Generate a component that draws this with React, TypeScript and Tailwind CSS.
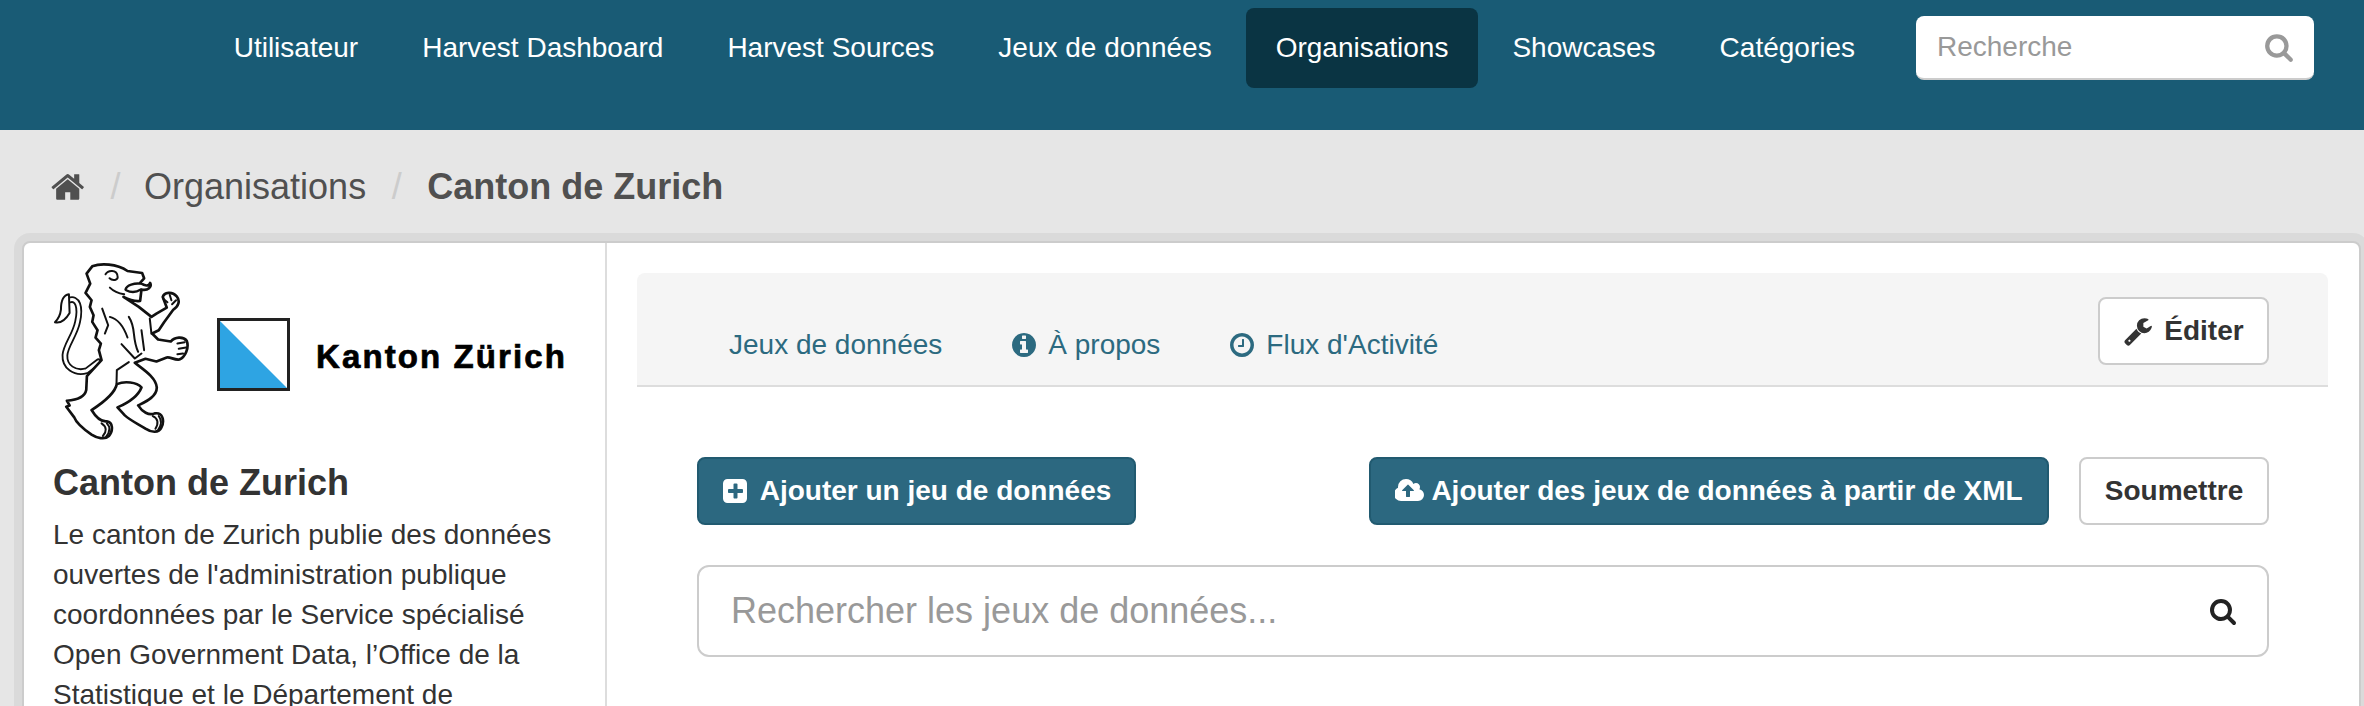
import type { ReactNode } from 'react';

const navItems = ['Utilisateur', 'Harvest Dashboard', 'Harvest Sources', 'Jeux de données', 'Organisations', 'Showcases', 'Catégories'];

function FaIcon({ d, className, box = '0 0 1792 1792' }: { d: string; className?: string; box?: string }) {
  return (
    <svg viewBox={box} className={className} fill="currentColor" aria-hidden="true">
      <path d={d} />
    </svg>
  );
}

const homePath = 'M1408 992v480q0 26-19 45t-45 19h-384v-384h-256v384h-384q-26 0-45-19t-19-45v-480q0-1 .5-3t.5-3l575-474 575 474q1 2 1 6zm223-69l-62 74q-8 9-21 11h-3q-13 0-21-7l-692-577-692 577q-12 8-24 7-13-2-21-11l-62-74q-8-10-7-23.5t11-20.5l719-599q32-26 76-26t76 26l244 204v-195q0-14 9-23t23-9h192q14 0 23 9t9 23v408l219 182q10 8 11 21.5t-7 23.5z';
const searchPath = 'M1216 832q0-185-131.5-316.5t-316.5-131.5-316.5 131.5-131.5 316.5 131.5 316.5 316.5 131.5 316.5-131.5 131.5-316.5zm512 832q0 52-38 90t-90 38q-54 0-90-38l-343-342q-179 124-399 124-143 0-273.5-55.5t-225-150-150-225-55.5-273.5 55.5-273.5 150-225 225-150 273.5-55.5 273.5 55.5 225 150 150 225 55.5 273.5q0 220-124 399l343 343q37 37 37 90z';
const infoPath = 'M1152 1376v-160q0-14-9-23t-23-9h-96v-512q0-14-9-23t-23-9h-320q-14 0-23 9t-9 23v160q0 14 9 23t23 9h96v320h-96q-14 0-23 9t-9 23v160q0 14 9 23t23 9h448q14 0 23-9t9-23zm-128-896v-160q0-14-9-23t-23-9h-192q-14 0-23 9t-9 23v160q0 14 9 23t23 9h192q14 0 23-9t9-23zm640 416q0 209-103 385.5t-279.5 279.5-385.5 103-385.5-103-279.5-279.5-103-385.5 103-385.5 279.5-279.5 385.5-103 385.5 103 279.5 279.5 103 385.5z';
const clockPath = 'M1024 544v448q0 14-9 23t-23 9h-320q-14 0-23-9t-9-23v-64q0-14 9-23t23-9h224v-352q0-14 9-23t23-9h64q14 0 23 9t9 23zm416 352q0-148-73-273t-198-198-273-73-273 73-198 198-73 273 73 273 198 198 273 73 273-73 198-198 73-273zm224 0q0 209-103 385.5t-279.5 279.5-385.5 103-385.5-103-279.5-279.5-103-385.5 103-385.5 279.5-279.5 385.5-103 385.5 103 279.5 279.5 103 385.5z';
const plusPath = 'M1344 960v-128q0-26-19-45t-45-19h-288v-288q0-26-19-45t-45-19h-128q-26 0-45 19t-19 45v288h-288q-26 0-45 19t-19 45v128q0 26 19 45t45 19h288v288q0 26 19 45t45 19h128q26 0 45-19t19-45v-288h288q26 0 45-19t19-45zm256-544v960q0 119-84.5 203.5t-203.5 84.5h-960q-119 0-203.5-84.5t-84.5-203.5v-960q0-119 84.5-203.5t203.5-84.5h960q119 0 203.5 84.5t84.5 203.5z';
const cloudPath = 'M1216 864q0-14-9-23l-352-352q-9-9-23-9t-23 9l-351 351q-10 12-10 24 0 14 9 23t23 9h224v352q0 13 9.5 22.5t22.5 9.5h192q13 0 22.5-9.5t9.5-22.5v-352h224q13 0 22.5-9.5t9.5-22.5zm640 288q0 159-112.5 271.5t-271.5 112.5h-1088q-185 0-316.5-131.5t-131.5-316.5q0-130 70-240t188-165q-2-30-2-43 0-212 150-362t362-150q156 0 285.5 87t188.5 231q71-62 166-62 106 0 181 75t75 181q0 76-41 138 130 31 213.5 135.5t83.5 238.5z';
const wrenchPath = 'M448 1472q0-26-19-45t-45-19-45 19-19 45 19 45 45 19 45-19 19-45zm644-420l-682 682q-37 37-90 37-52 0-91-37l-106-108q-38-36-38-90 0-53 38-91l681-681q39 98 114.5 173.5t173.5 114.5zm634-435q0 39-23 106-47 134-164.5 217.5t-258.5 83.5q-185 0-316.5-131.5t-131.5-316.5 131.5-316.5 316.5-131.5q58 0 121.5 16.5t107.5 46.5q16 11 16 28t-16 28l-293 169v224l193 107q5-3 79-48.5t135.5-81 70.5-35.5q15 0 23.5 10t8.5 25z';

function Lion() {
  const tail = 'M82 150 C108 140 118 170 108 215 C100 255 72 285 70 315 C68 350 100 372 135 362 L170 335';
  return (
    <svg viewBox="35 35 410 535" className="w-[137px] h-[178px] shrink-0" fill="none" strokeLinejoin="round" strokeLinecap="round">
      <path d={tail} stroke="#111" strokeWidth="20" />
      <path d={tail} stroke="#fff" strokeWidth="9" />
      <path
        d="M82 132 C62 135 58 160 58 178 C56 195 48 208 40 216 C58 220 74 205 84 188 Z"
        fill="#fff"
        stroke="#111"
        strokeWidth="6"
      />
      <path
        d="M135 70 L152 48 C178 38 225 40 258 62 L302 68 L308 84 L296 98 C310 106 322 110 326 98 C332 110 320 122 300 118 L296 152 C280 154 262 148 246 140 L292 170 L330 200 L345 190 L376 172 L364 140 C368 126 392 122 406 138 C418 152 410 170 396 178 L368 216 L352 240 L332 250 L350 268 L388 274 C400 260 426 258 436 272 C444 292 432 320 414 328 C398 330 388 320 376 322 L345 334 L312 326 L280 338 C305 358 344 382 346 412 C347 440 312 455 290 466 C302 485 322 498 340 490 C364 486 370 512 360 532 C352 550 330 548 312 536 C295 524 270 514 250 496 L228 472 C260 458 290 438 300 412 C285 396 250 392 226 402 C220 430 178 462 150 480 C162 500 178 516 196 514 C214 516 216 542 202 558 C190 570 165 564 150 554 C130 540 105 522 98 502 L74 470 L84 466 L76 452 C105 450 130 440 134 420 L136 378 L180 330 L172 300 L178 280 L162 262 L168 240 L152 215 L156 195 L145 170 L150 150 L132 128 L146 100 Z"
        fill="#fff"
        stroke="#111"
        strokeWidth="8"
      />
      <g stroke="#111" strokeWidth="6">
        <path d="M192 72 C200 58 225 58 228 76 C232 92 212 92 204 84" />
        <path d="M205 112 C218 125 235 130 248 132" />
        <path d="M252 118 C255 104 280 98 296 100 M254 120 C270 128 285 126 298 118" strokeWidth="7" />
        <path d="M182 175 L200 225 L190 250 M205 200 C225 205 245 225 258 262" />
        <path d="M262 200 C285 235 270 260 290 305 M325 205 L330 250 M300 240 L308 300" />
        <path d="M240 282 L280 325 L300 310" />
        <path d="M225 400 L226 360 L262 336" />
        <path d="M366 146 L378 156 M385 134 L390 150 M404 150 L392 162" />
        <path d="M408 280 L430 276 M412 296 L434 292 M408 312 L425 310" />
        <path d="M334 498 C350 505 352 520 342 536 M352 498 C362 510 360 525 350 540" />
        <path d="M180 520 C196 530 196 545 184 558 M196 520 C206 530 206 545 194 560" />
      </g>
    </svg>
  );
}

function OrgLogo() {
  return (
    <div className="flex items-center h-[175px]">
      <Lion />
      <svg viewBox="0 0 73 73" className="w-[73px] h-[73px] ml-[27px] mt-2 shrink-0" aria-hidden="true">
        <rect x="1.5" y="1.5" width="70" height="70" fill="#fff" />
        <path d="M1.5 1.5 L71.5 71.5 H1.5 Z" fill="#2ea4e3" />
        <rect x="1.5" y="1.5" width="70" height="70" fill="none" stroke="#222" strokeWidth="3" />
      </svg>
      <span className="ml-[26px] mt-3 text-[33px] leading-none font-bold tracking-[2.1px] text-black whitespace-nowrap [-webkit-text-stroke:0.7px_black]">Kanton Zürich</span>
    </div>
  );
}

function Tab({ icon, children }: { icon?: ReactNode; children: ReactNode }) {
  return (
    <a className="flex items-center gap-[10px] text-[#2c6a80] text-[28px] leading-10">
      {icon}
      {children}
    </a>
  );
}

export default function App() {
  return (
    <div className="h-[706px] overflow-hidden bg-[#e6e6e6] font-['Liberation_Sans',Arial,sans-serif] text-[#333]">
      <header className="h-[130px] bg-[#195b75] flex justify-end pt-2 pr-[50px]">
        <nav className="flex gap-1 h-20 mr-[31px]">
          {navItems.map((item) => (
            <a
              key={item}
              className={`px-[30px] flex items-center rounded-lg text-[28px] text-white ${item === 'Organisations' ? 'bg-[#0a3443]' : ''}`}
            >
              {item}
            </a>
          ))}
        </nav>
        <div className="w-[398px] h-16 mt-2 bg-white rounded-lg border-b-2 border-[#ccc] flex items-center justify-between pl-[21px] pr-[20px]">
          <span className="text-[28px] text-[#999]">Recherche</span>
          <FaIcon d={searchPath} className="w-[30px] h-[30px] text-[#999]" />
        </div>
      </header>

      <div className="h-[111px] flex items-center pl-[51px] pt-[2px] text-[36px] text-[#505050]">
        <FaIcon d={homePath} className="w-[36px] h-[36px]" />
        <span className="mx-[23.5px] text-[#ccc]">/</span>
        <span>Organisations</span>
        <span className="mx-[25.5px] text-[#ccc]">/</span>
        <span className="font-bold">Canton de Zurich</span>
      </div>

      <main className="ml-[22px] mr-[3px] flex bg-white rounded-lg border-2 border-[#ccc] shadow-[0_0_0_8px_rgba(0,0,0,0.05)] h-[600px]">
        <aside className="w-[583px] shrink-0 border-r-2 border-[#ddd] pt-5 pl-[29px] pr-[40px]">
          <OrgLogo />
          <h1 className="mt-[22px] text-[36px] leading-[45px] font-bold text-[#333]">Canton de Zurich</h1>
          <p className="mt-[10px] text-[28px] leading-10 text-[#333]">
            Le canton de Zurich publie des données ouvertes de l'administration publique coordonnées par le Service spécialisé Open Government Data, l’Office de la Statistique et le Département de
          </p>
        </aside>

        <section className="flex-1 pt-[30px] pl-[30px] pr-[31px]">
          <div className="h-[114px] bg-[#f5f5f5] border-b-2 border-[#ddd] rounded-t-lg flex justify-between pl-[92px] pr-[59px] pt-[24px]">
            <div className="flex gap-[68px] pt-[28px] h-fit">
              <Tab>Jeux de données</Tab>
              <Tab icon={<FaIcon d={infoPath} className="w-[28px] h-[28px]" />}>À propos</Tab>
              <Tab icon={<FaIcon d={clockPath} className="w-[28px] h-[28px]" />}>Flux d'Activité</Tab>
            </div>
            <button className="w-[171px] h-[68px] flex items-center justify-center gap-[11px] bg-white border-2 border-[#ccc] rounded-lg text-[28px] font-bold text-[#333]">
              <FaIcon d={wrenchPath} className="w-[30px] h-[30px]" />
              Éditer
            </button>
          </div>

          <div className="pl-[60px] pr-[59px] pt-[70px]">
            <div className="flex items-center">
              <button className="w-[439px] h-[68px] flex items-center justify-center gap-[10px] bg-[#2c6880] border-2 border-[#215a70] rounded-lg text-[28px] font-bold text-white">
                <FaIcon d={plusPath} className="w-[28px] h-[28px]" />
                Ajouter un jeu de données
              </button>
              <button className="ml-auto w-[680px] h-[68px] flex items-center justify-center gap-[6px] bg-[#2c6880] border-2 border-[#215a70] rounded-lg text-[28px] font-bold text-white">
                <FaIcon d={cloudPath} box="0 0 1920 1792" className="w-[30px] h-[28px]" />
                Ajouter des jeux de données à partir de XML
              </button>
              <button className="ml-[30px] w-[190px] h-[68px] bg-white border-2 border-[#ccc] rounded-lg text-[28px] font-bold text-[#333]">
                Soumettre
              </button>
            </div>
            <div className="mt-10 h-[92px] flex items-center justify-between border-2 border-[#ccc] rounded-xl pl-[32px] pr-[30px]">
              <span className="text-[36px] text-[#999]">Rechercher les jeux de données...</span>
              <FaIcon d={searchPath} className="w-[28px] h-[28px] text-[#222]" />
            </div>
          </div>
        </section>
      </main>
    </div>
  );
}
